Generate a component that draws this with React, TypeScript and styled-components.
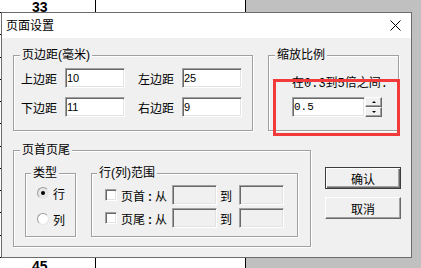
import React from 'react';
import styled, { createGlobalStyle, css } from 'styled-components';

const GlobalStyle = createGlobalStyle`
  html, body {
    margin: 0;
    padding: 0;
  }
  body {
    font-family: "Liberation Sans", "Noto Sans CJK SC", sans-serif;
    font-size: 12px;
    color: #000;
  }
  * {
    box-sizing: border-box;
  }
`;

// classic sunken 3d edge, used by edits and check boxes
const sunken = css`
  border: 1px solid;
  border-color: #a0a0a0 #fff #fff #a0a0a0;
  box-shadow: inset 1px 1px 0 #696969, inset -1px -1px 0 #e3e3e3;
`;

const Screen = styled.div`
  position: relative;
  width: 421px;
  height: 268px;
  overflow: hidden;
  background: #c0c0c0;
`;

// spreadsheet behind the dialog
const Sheet = styled.div`
  width: 246px;
  height: 100%;
  background: #fff;
  border-right: 1px solid #000;
  display: flex;
  flex-direction: column;
`;

const SheetRow = styled.div<{ $h?: number }>`
  display: flex;
  flex: ${p => (p.$h ? 'none' : '1')};
  height: ${p => (p.$h ? `${p.$h}px` : 'auto')};
  border-bottom: 1px solid #000;
`;

const LastRow = styled(SheetRow)`
  border-bottom: none;
`;

const RowNumber = styled.div<{ $top?: number }>`
  width: 96px;
  flex: none;
  border-right: 1px solid #000;
  padding: ${p => p.$top ?? 0}px 0 0 32px;
  font: bold 14px/14px "Liberation Sans", sans-serif;
`;

const Dialog = styled.div`
  position: absolute;
  left: 1px;
  top: 12px;
  width: 411px;
  height: 246px;
  border: 1px solid #6c6c6c;
  background: #f0f0f0;
  display: flex;
  flex-direction: column;
`;

const TitleBar = styled.div`
  flex: none;
  height: 25px;
  background: #fff;
  display: flex;
  align-items: center;
  justify-content: space-between;
  padding: 0 10px 0 4px;
  line-height: 14px;
`;

const CloseIcon = () => (
  <svg width="11" height="11" viewBox="0 0 11 11">
    <path d="M0.5 0.5 L10.5 10.5 M10.5 0.5 L0.5 10.5" stroke="#000" strokeWidth="1" fill="none" />
  </svg>
);

const Client = styled.div`
  flex: 1;
  padding: 9px 0 0 11px;
  display: flex;
  flex-direction: column;
`;

const TopRow = styled.div`
  display: flex;
  gap: 15px;
`;

const BottomRow = styled.div`
  display: flex;
  gap: 14px;
  margin-top: 11px;
`;

const GroupBox = styled.fieldset<{ $w: number; $h: number; $pl: number }>`
  margin: 0;
  padding: 0 0 0 ${p => p.$pl}px;
  min-inline-size: 0;
  width: ${p => p.$w}px;
  height: ${p => p.$h}px;
  border: 1px solid #a0a0a0;
  box-shadow: inset 1px 1px 0 #fff, 1px 1px 0 #fff;
  flex: none;
`;

const Legend = styled.legend`
  padding: 0 2px;
  background: #f0f0f0;
  line-height: 16px;
  font-size: 12px;
`;

const MarginGrid = styled.div`
  display: grid;
  grid-template-columns: 36px 60px 41px 60px;
  grid-auto-rows: 20px;
  column-gap: 8px;
  row-gap: 9px;
  padding-top: 5px;
  margin-left: 1px;
`;

const FieldLabel = styled.span<{ $right?: boolean }>`
  display: flex;
  align-items: center;
  justify-content: ${p => (p.$right ? 'flex-end' : 'flex-start')};
  white-space: nowrap;
`;

const Edit = styled.input<{ $w: number; $mono?: boolean }>`
  ${sunken};
  width: ${p => p.$w}px;
  height: 20px;
  padding: 0 1px;
  margin: 0;
  background: ${p => (p.disabled ? '#f0f0f0' : '#fff')};
  font-family: ${p => (p.$mono ? '"Liberation Mono", monospace' : '"Liberation Sans", sans-serif')};
  font-size: 11px;
  color: #000;
  outline: none;
`;

const ScaleBody = styled.div`
  padding-left: 17px;
`;

const Hint = styled.div`
  margin-top: 14px;
  line-height: 14px;
  white-space: nowrap;
  font-family: "Liberation Mono", "Noto Sans CJK SC", monospace;
  font-size: 12px;
`;

const Spin = styled.div`
  display: flex;
  margin-top: 6px;
`;

const SpinButtons = styled.div`
  display: flex;
  flex-direction: column;
`;

const SpinButton = styled.div<{ $down?: boolean }>`
  width: 17px;
  height: 10px;
  background: #f0f0f0;
  border: 1px solid;
  border-color: #fff #696969 #696969 #fff;
  box-shadow: inset -1px -1px 0 #a0a0a0;
  display: flex;
  align-items: center;
  justify-content: center;

  &::after {
    content: "";
    border-left: 2px solid transparent;
    border-right: 2px solid transparent;
    ${p => (p.$down ? 'border-top: 2px solid #000;' : 'border-bottom: 2px solid #000;')}
  }
`;

const SubRow = styled.div`
  display: flex;
  gap: 15px;
  margin-left: 5px;
  padding-top: 7px;
`;

const RadioList = styled.div`
  display: flex;
  flex-direction: column;
  gap: 12px;
  padding-top: 5px;
  margin-left: 6px;
`;

const RadioRow = styled.label`
  display: flex;
  align-items: center;
  gap: 4px;
  height: 14px;
`;

const Radio = styled.span<{ $checked?: boolean }>`
  width: 12px;
  height: 12px;
  border-radius: 50%;
  border: 1px solid;
  border-color: #9a9a9a #e6e6e6 #e6e6e6 #9a9a9a;
  background: ${p => (p.$checked ? '#e6e6e6' : '#fff')};
  display: flex;
  align-items: center;
  justify-content: center;

  &::after {
    content: "";
    width: 4px;
    height: 4px;
    border-radius: 50%;
    background: ${p => (p.$checked ? '#000' : 'transparent')};
  }
`;

const RangeGrid = styled.div`
  display: grid;
  grid-template-columns: 12px 55px 45px 22px 45px;
  grid-auto-rows: 20px;
  row-gap: 3px;
  align-items: center;
  padding-top: 4px;
  margin-left: 8px;
`;

const CheckBox = styled.span`
  ${sunken};
  width: 12px;
  height: 12px;
  background: #fff;
`;

const RangeLabel = styled.span`
  padding-left: 4px;
  white-space: nowrap;
`;

const Colon = styled.span`
  margin: 0 3px;
  font-weight: bold;
`;

const To = styled.span`
  padding-left: 3px;
`;

const ButtonColumn = styled.div`
  display: flex;
  flex-direction: column;
  gap: 8px;
  margin-top: 25px;
`;

const DialogButton = styled.button<{ $default?: boolean }>`
  width: 76px;
  height: 22px;
  margin: 0;
  padding: 0;
  background: #f0f0f0;
  font-family: "Liberation Sans", "Noto Sans CJK SC", sans-serif;
  font-size: 12px;
  color: #000;
  border: 1px solid;
  ${p =>
    p.$default
      ? css`
          border-color: #3c3c3c;
          box-shadow: inset 1px 1px 0 #fff, inset -1px -1px 0 #696969, inset -2px -2px 0 #a0a0a0;
        `
      : css`
          border-color: #fff #696969 #696969 #fff;
          box-shadow: inset -1px -1px 0 #a0a0a0;
        `}
`;

// red annotation frame drawn over the screenshot
const Highlight = styled.div`
  position: absolute;
  left: 273px;
  top: 79px;
  width: 127px;
  height: 57px;
  border: 3px solid #f23a3a;
`;

const middleRows = Array.from({ length: 11 }, (_, i) => 34 + i);

export default function App() {
  return (
    <>
      <GlobalStyle />
      <Screen>
        <Sheet>
          <SheetRow $h={13}>
            <RowNumber>33</RowNumber>
          </SheetRow>
          {middleRows.map(n => (
            <SheetRow key={n}>
              <RowNumber />
            </SheetRow>
          ))}
          <LastRow $h={10}>
            <RowNumber $top={1}>45</RowNumber>
          </LastRow>
        </Sheet>

        <Dialog>
          <TitleBar>
            <span>页面设置</span>
            <CloseIcon />
          </TitleBar>
          <Client>
            <TopRow>
              <GroupBox $w={240} $h={84} $pl={6}>
                <Legend>页边距(毫米)</Legend>
                <MarginGrid>
                  <FieldLabel>上边距</FieldLabel>
                  <Edit $w={60} value="10" readOnly />
                  <FieldLabel $right>左边距</FieldLabel>
                  <Edit $w={60} value="25" readOnly />
                  <FieldLabel>下边距</FieldLabel>
                  <Edit $w={60} value="11" readOnly />
                  <FieldLabel $right>右边距</FieldLabel>
                  <Edit $w={60} value="9" readOnly />
                </MarginGrid>
              </GroupBox>
              <GroupBox $w={131} $h={84} $pl={6}>
                <Legend>缩放比例</Legend>
                <ScaleBody>
                  <Hint>在0.3到5倍之间.</Hint>
                  <Spin>
                    <Edit $w={73} $mono value="0.5" readOnly />
                    <SpinButtons>
                      <SpinButton />
                      <SpinButton $down />
                    </SpinButtons>
                  </Spin>
                </ScaleBody>
              </GroupBox>
            </TopRow>

            <BottomRow>
              <GroupBox $w={298} $h={105} $pl={6}>
                <Legend>页首页尾</Legend>
                <SubRow>
                  <GroupBox $w={51} $h={72} $pl={5}>
                    <Legend>类型</Legend>
                    <RadioList>
                      <RadioRow>
                        <Radio $checked />
                        行
                      </RadioRow>
                      <RadioRow>
                        <Radio />
                        列
                      </RadioRow>
                    </RadioList>
                  </GroupBox>
                  <GroupBox $w={207} $h={72} $pl={5}>
                    <Legend>行(列)范围</Legend>
                    <RangeGrid>
                      <CheckBox />
                      <RangeLabel>
                        页首<Colon>:</Colon>从
                      </RangeLabel>
                      <Edit $w={45} disabled />
                      <To>到</To>
                      <Edit $w={45} disabled />
                      <CheckBox />
                      <RangeLabel>
                        页尾<Colon>:</Colon>从
                      </RangeLabel>
                      <Edit $w={45} disabled />
                      <To>到</To>
                      <Edit $w={45} disabled />
                    </RangeGrid>
                  </GroupBox>
                </SubRow>
              </GroupBox>
              <ButtonColumn>
                <DialogButton $default>确认</DialogButton>
                <DialogButton>取消</DialogButton>
              </ButtonColumn>
            </BottomRow>
          </Client>
        </Dialog>

        <Highlight />
      </Screen>
    </>
  );
}
